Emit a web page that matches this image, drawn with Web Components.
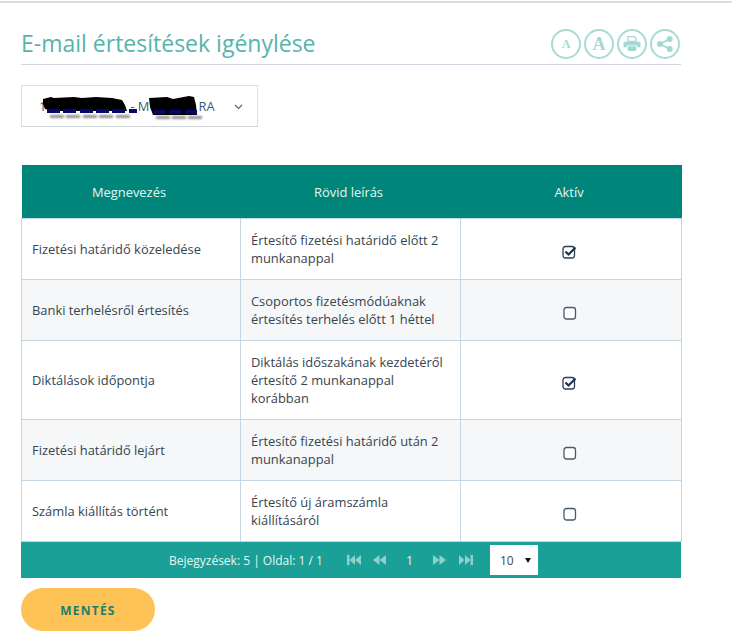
<!DOCTYPE html>
<html lang="hu">
<head>
<meta charset="utf-8">
<title>E-mail értesítések igénylése</title>
<style>
  html, body { margin: 0; background: #fff; }
  body { font-family: "Open Sans", "Liberation Sans", sans-serif; color: #2f3f50; }
</style>
</head>
<body>
<notif-page>
  <page-head title-text="E-mail értesítések igénylése"></page-head>
  <meter-select></meter-select>
  <notif-table></notif-table>
  <table-pager></table-pager>
  <save-button>MENTÉS</save-button>
</notif-page>

<script>
class NotifPage extends HTMLElement {
  constructor() {
    super();
    this.attachShadow({ mode: "open" });
    this.shadowRoot.innerHTML = `
      <style>
        :host { display: block; height: 640px; padding-left: 21px; border-top: 2px solid #dcdce8; margin-top: 1px; }
        .wrap { display: flex; flex-direction: column; width: 660px; }
      </style>
      <div class="wrap"><slot></slot></div>
    `;
  }
}

class PageHead extends HTMLElement {
  constructor() {
    super();
    this.attachShadow({ mode: "open" });
    this.shadowRoot.innerHTML = `
      <style>
        :host { display: flex; align-items: center; justify-content: space-between; height: 61px; border-bottom: 1px solid #d5d5e3; }
        h1 { margin: 0; padding-top: 19px; font: 400 23px/40px "Open Sans", sans-serif; color: #55b4ac; }
        .tools { display: flex; gap: 3px; padding-top: 19px; margin-right: 1px; margin-top: 1px; }
        .tool { width: 30px; height: 30px; box-sizing: border-box; border: 2px solid #a8dbd4; border-radius: 50%; display: flex; align-items: center; justify-content: center; color: #a3d9d2; font-family: "Liberation Serif", serif; font-weight: 700; line-height: 1; }
        svg { display: block; fill: #a3d9d2; }
      </style>
      <h1></h1>
      <div class="tools">
        <span class="tool" style="font-size:12px">A</span>
        <span class="tool" style="font-size:18px">A</span>
        <span class="tool"><svg width="18" height="15" viewBox="0 0 18 16"><path d="M4 0h8l2 2v4H4zM5.300 1.200v3.800h7.400V2.600l-1.400-1.400zM1.500 6h15A1.500 1.500 0 0 1 18 7.500V12h-3.500v-2h-11v2H0V7.500A1.500 1.500 0 0 1 1.500 6zM4.500 11h9v5h-9z"/></svg></span>
        <span class="tool"><svg width="16" height="16" viewBox="0 0 16 16"><circle cx="12.700" cy="3" r="3"/><circle cx="3" cy="8" r="3"/><circle cx="12.700" cy="13" r="3"/><path d="M3 8l9.700-5M3 8l9.700 5" stroke="#a3d9d2" stroke-width="1.800" fill="none"/></svg></span>
      </div>
    `;
    this.shadowRoot.querySelector("h1").textContent = this.getAttribute("title-text");
  }
}

class MeterSelect extends HTMLElement {
  constructor() {
    super();
    this.attachShadow({ mode: "open" });
    this.shadowRoot.innerHTML = `
      <style>
        :host { display: block; position: relative; width: 237px; height: 42px; margin: 20px 0 38px; box-sizing: border-box; border: 1px solid #dcdfe3; border-bottom-color: #cfd3d8; background: #fff; }
        .val { display: flex; align-items: center; height: 100%; padding-left: 17px; font: 400 12.900px "Open Sans", sans-serif; color: #3a5a78; white-space: pre; }
        .gap { display: inline-block; width: 84px; }
        .gap2 { display: inline-block; width: 49px; }
        .chev { position: absolute; left: 212px; top: 18px; }
        .mask { position: absolute; left: 20px; top: 8px; }
      </style>
      <div class="val">1<span class="gap"></span>- M<span class="gap2"></span>RA</div>
      <svg class="chev" width="9" height="6" viewBox="0 0 9 6"><path d="M1 1l3.500 3.500L8 1" fill="none" stroke="#55606c" stroke-width="1.100"/></svg>
      <svg class="mask" width="172" height="34" viewBox="0 0 172 34">
        <defs><filter id="soft" x="-20%" y="-100%" width="140%" height="300%"><feGaussianBlur stdDeviation="1.200"/></filter></defs>
        <g fill="#8f8f8f" filter="url(#soft)"><rect x="8" y="21" width="14" height="3"/><rect x="24" y="21" width="14" height="3"/><rect x="41" y="21" width="14" height="3"/><rect x="57" y="21" width="14" height="3"/><rect x="74" y="21" width="14" height="3"/><rect x="114" y="22" width="14" height="3"/><rect x="130" y="22" width="14" height="3"/><rect x="146" y="22" width="14" height="3"/></g>
        <path d="M1 5l8-2 3 1 20-1 8 1 14-1 16 1 10 2 3 5 2 6H10L3 15 1 10zM107 4l18-1 6 2 16-3 5 1 2 8 1 10h-44l-3-8z" fill="#000"/>
        <g fill="#06066e"><rect x="5" y="15" width="13" height="4"/><rect x="21" y="15" width="13" height="4"/><rect x="38" y="15" width="13" height="4"/><rect x="54" y="15" width="13" height="4"/><rect x="70" y="15" width="13" height="4"/><rect x="87" y="15" width="8" height="4"/><rect x="111" y="16" width="12" height="4"/><rect x="127" y="16" width="12" height="4"/><rect x="143" y="16" width="12" height="4"/></g>
      </svg>
    `;
  }
}

class NotifTable extends HTMLElement {
  constructor() {
    super();
    this.attachShadow({ mode: "open" });
    const rows = [
      { name: "Fizetési határidő közeledése", desc: "Értesítő fizetési határidő előtt 2<br>munkanappal", on: true },
      { name: "Banki terhelésről értesítés", desc: "Csoportos fizetésmódúaknak<br>értesítés terhelés előtt 1 héttel", on: false },
      { name: "Diktálások időpontja", desc: "Diktálás időszakának kezdetéről<br>értesítő 2 munkanappal<br>korábban", on: true },
      { name: "Fizetési határidő lejárt", desc: "Értesítő fizetési határidő után 2<br>munkanappal", on: false },
      { name: "Számla kiállítás történt", desc: "Értesítő új áramszámla<br>kiállításáról", on: false },
    ];
    this.shadowRoot.innerHTML = `
      <style>
        :host { display: block; width: 660px; }
        table { width: 660px; table-layout: fixed; border-collapse: collapse; font: 400 12.900px/18px "Open Sans", sans-serif; color: #36454f; }
        th { height: 53px; padding: 0 4px 0 0; background: #00857a; color: #e6f6f3; font-weight: 400; text-align: center; }
        td { border: 1px solid #c3d6e2; padding: 12px 10px; }
        tr:nth-child(even) td { background: #f5f7f9; }
        td.box { text-align: center; padding: 0; }
        svg { display: block; margin: 6px auto 0 auto; }
        svg.on { transform: translateX(-1px); }
      </style>
      <table>
        <colgroup><col style="width:219px"><col style="width:220px"><col style="width:221px"></colgroup>
        <thead><tr><th>Megnevezés</th><th>Rövid leírás</th><th>Aktív</th></tr></thead>
        <tbody>
          ${rows.map((r) => `
            <tr>
              <td>${r.name}</td>
              <td>${r.desc}</td>
              <td class="box">
                <svg class="${r.on ? "on" : ""}" width="16" height="14" viewBox="0 0 16 14">
                  <rect x="1" y="1.500" width="11.500" height="11.500" rx="2.500" fill="#fff" stroke="${r.on ? "#2b3f55" : "#4a5a6c"}" stroke-width="1.300"/>
                  ${r.on ? '<path d="M3.500 6.500l3 3L13.500 2.500" fill="none" stroke="#1e3550" stroke-width="2.200"/>' : ""}
                </svg>
              </td>
            </tr>`).join("")}
        </tbody>
      </table>
    `;
  }
}

class TablePager extends HTMLElement {
  constructor() {
    super();
    this.attachShadow({ mode: "open" });
    this.shadowRoot.innerHTML = `
      <style>
        :host { display: flex; align-items: center; height: 36px; background: #1aa096; color: #e6f6f3; font: 400 12px "Open Sans", sans-serif; }
        .info { margin-left: 148px; width: 178px; white-space: nowrap; }
        svg { display: block; fill: #8fd0c9; }
        .nav { display: flex; align-items: center; }
        .num { width: 47px; text-align: center; font-weight: 400; font-size: 12.500px; }
        .size { margin-left: 17px; width: 48px; height: 30px; box-sizing: border-box; background: #fff; color: #444; display: flex; align-items: center; justify-content: space-between; padding: 0 7px 0 10px; }
        .tri { width: 0; height: 0; border-left: 3.500px solid transparent; border-right: 3.500px solid transparent; border-top: 5px solid #111; }
      </style>
      <div class="info">Bejegyzések: 5 | Oldal: 1 / 1</div>
      <div class="nav">
        <svg width="14" height="10" viewBox="0 0 14 10"><path d="M0 0h2.500v10H0zM8 0v10L2.500 5zM14 0v10L8 5z"/></svg>
        <svg width="13" height="10" viewBox="0 0 13 10" style="margin-left:12px"><path d="M6.500 0v10L0 5zM13 0v10L6.500 5z"/></svg>
        <span class="num">1</span>
        <svg width="13" height="10" viewBox="0 0 13 10"><path d="M0 0v10L6.500 5zM6.500 0v10L13 5z"/></svg>
        <svg width="14" height="10" viewBox="0 0 14 10" style="margin-left:13px"><path d="M0 0v10L5.500 5zM6 0v10L11.500 5zM11.500 0H14v10h-2.500z"/></svg>
      </div>
      <div class="size"><span>10</span><span class="tri"></span></div>
    `;
  }
}

class SaveButton extends HTMLElement {
  constructor() {
    super();
    this.attachShadow({ mode: "open" });
    this.shadowRoot.innerHTML = `
      <style>
        :host { display: flex; align-items: center; justify-content: center; box-sizing: border-box; padding-top: 1px; width: 134px; height: 43px; margin-top: 10px; border-radius: 22px; background: #fec356; color: #1c7d6e; font: 700 12px "Open Sans", sans-serif; letter-spacing: 1.200px; }
      </style>
      <slot></slot>
    `;
  }
}

customElements.define("notif-page", NotifPage);
customElements.define("page-head", PageHead);
customElements.define("meter-select", MeterSelect);
customElements.define("notif-table", NotifTable);
customElements.define("table-pager", TablePager);
customElements.define("save-button", SaveButton);
</script>
</body>
</html>
